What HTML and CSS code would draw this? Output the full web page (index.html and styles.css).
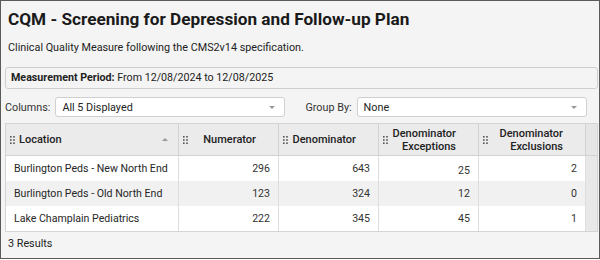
FILE: index.html
```html
<!DOCTYPE html>
<html>
<head>
<meta charset="utf-8">
<link rel="stylesheet" href="styles.css">
</head>
<body>
<div class="frame">
  <h1 class="title">CQM - Screening for Depression and Follow-up Plan</h1>
  <p class="desc">Clinical Quality Measure following the CMS2v14 specification.</p>
  <div class="period"><b>Measurement Period:</b>&nbsp;From 12/08/2024 to 12/08/2025</div>
  <div class="toolbar">
    <div class="field">
      <span class="label">Columns:</span>
      <div class="select"><span>All 5 Displayed</span><i class="caret"></i></div>
    </div>
    <div class="field">
      <span class="label">Group By:</span>
      <div class="select"><span>None</span><i class="caret"></i></div>
    </div>
  </div>
  <div class="grid">
    <div class="hcell first">
      <svg class="handle" width="5" height="8" viewBox="0 0 5 8"><rect x="0" y="0" width="1.6" height="1.6"/><rect x="3.2" y="0" width="1.6" height="1.6"/><rect x="0" y="3.2" width="1.6" height="1.6"/><rect x="3.2" y="3.2" width="1.6" height="1.6"/><rect x="0" y="6.4" width="1.6" height="1.6"/><rect x="3.2" y="6.4" width="1.6" height="1.6"/></svg>
      <span class="hlabel left">Location</span>
      <i class="sort"></i>
    </div>
    <div class="hcell">
      <svg class="handle" width="5" height="8" viewBox="0 0 5 8"><rect x="0" y="0" width="1.6" height="1.6"/><rect x="3.2" y="0" width="1.6" height="1.6"/><rect x="0" y="3.2" width="1.6" height="1.6"/><rect x="3.2" y="3.2" width="1.6" height="1.6"/><rect x="0" y="6.4" width="1.6" height="1.6"/><rect x="3.2" y="6.4" width="1.6" height="1.6"/></svg>
      <span class="hlabel">Numerator</span>
    </div>
    <div class="hcell">
      <svg class="handle" width="5" height="8" viewBox="0 0 5 8"><rect x="0" y="0" width="1.6" height="1.6"/><rect x="3.2" y="0" width="1.6" height="1.6"/><rect x="0" y="3.2" width="1.6" height="1.6"/><rect x="3.2" y="3.2" width="1.6" height="1.6"/><rect x="0" y="6.4" width="1.6" height="1.6"/><rect x="3.2" y="6.4" width="1.6" height="1.6"/></svg>
      <span class="hlabel">Denominator</span>
    </div>
    <div class="hcell">
      <svg class="handle" width="5" height="8" viewBox="0 0 5 8"><rect x="0" y="0" width="1.6" height="1.6"/><rect x="3.2" y="0" width="1.6" height="1.6"/><rect x="0" y="3.2" width="1.6" height="1.6"/><rect x="3.2" y="3.2" width="1.6" height="1.6"/><rect x="0" y="6.4" width="1.6" height="1.6"/><rect x="3.2" y="6.4" width="1.6" height="1.6"/></svg>
      <span class="hlabel">Denominator<br>Exceptions</span>
    </div>
    <div class="hcell">
      <svg class="handle" width="5" height="8" viewBox="0 0 5 8"><rect x="0" y="0" width="1.6" height="1.6"/><rect x="3.2" y="0" width="1.6" height="1.6"/><rect x="0" y="3.2" width="1.6" height="1.6"/><rect x="3.2" y="3.2" width="1.6" height="1.6"/><rect x="0" y="6.4" width="1.6" height="1.6"/><rect x="3.2" y="6.4" width="1.6" height="1.6"/></svg>
      <span class="hlabel">Denominator<br>Exclusions</span>
    </div>
    <div class="hfill"></div>

    <div class="cell text">Burlington Peds - New North End</div>
    <div class="cell num">296</div>
    <div class="cell num">643</div>
    <div class="cell num low">25</div>
    <div class="cell num">2</div>
    <div class="fill"></div>

    <div class="cell text alt">Burlington Peds - Old North End</div>
    <div class="cell num alt">123</div>
    <div class="cell num alt">324</div>
    <div class="cell num alt">12</div>
    <div class="cell num alt">0</div>
    <div class="fill"></div>

    <div class="cell text">Lake Champlain Pediatrics</div>
    <div class="cell num">222</div>
    <div class="cell num">345</div>
    <div class="cell num">45</div>
    <div class="cell num">1</div>
    <div class="fill"></div>
  </div>
  <div class="footer">3 Results</div>
</div>
</body>
</html>
```

FILE: styles.css
```css
* { box-sizing: border-box; }
html, body { margin: 0; padding: 0; }
body {
  width: 600px;
  height: 260px;
  background: #ffffff;
  font-family: Roboto, "Liberation Sans", Arial, sans-serif;
  color: #222;
}
.frame {
  width: 600px;
  height: 259px;
  border: 1px solid #5a5a5a;
  background: #f4f4f4;
  padding: 0 1px 0 4px;
  display: flex;
  flex-direction: column;
}
.title {
  margin: 8px 0 0 3px;
  font-size: 17.2px;
  font-weight: 700;
  line-height: 20px;
  color: #1a1a1a;
}
.desc {
  margin: 12px 0 0 3px;
  font-size: 10.8px;
  line-height: 14px;
  color: #222;
}
.period {
  margin-top: 12px;
  height: 22px;
  border: 1px solid #cfcfcf;
  border-radius: 3px;
  background: #f4f4f4;
  font-size: 10.7px;
  line-height: 20px;
  padding-left: 5px;
  color: #222;
  display: flex;
}
.period b { font-weight: 700; }
.toolbar {
  margin-top: 8px;
  height: 20px;
  display: flex;
  gap: 20px;
}
.field {
  display: flex;
  align-items: center;
  gap: 5px;
}
.label {
  font-size: 10.8px;
  color: #333;
}
.select {
  width: 230px;
  height: 20px;
  background: #fff;
  border: 1px solid #d0d0d0;
  border-radius: 3px;
  display: flex;
  align-items: center;
  justify-content: space-between;
  padding: 0 9px 0 6px;
  font-size: 10.8px;
  color: #222;
}
.caret {
  width: 0;
  height: 0;
  border-left: 3px solid transparent;
  border-right: 3px solid transparent;
  border-top: 3px solid #999;
}
.grid {
  margin-top: 6px;
  display: grid;
  grid-template-columns: 173px 100px 100px 100px 107px 1fr;
  grid-template-rows: 32px 25px 25px 25px;
  border: 1px solid #d4d4d4;
  background: #fff;
}
.hcell {
  background: #ebebeb;
  border-right: 1px solid #d2d2d2;
  border-bottom: 1px solid #d2d2d2;
  display: flex;
  align-items: center;
  padding-left: 4px;
  font-size: 11px;
  font-weight: 500;
  color: #222;
}
.handle { fill: #555; flex: none; }
.hlabel {
  flex: 1;
  text-align: right;
  padding-right: 22px;
  line-height: 13px;
}
.hlabel.left {
  text-align: left;
  padding: 0 0 0 4px;
}
.sort {
  width: 0;
  height: 0;
  border-left: 3px solid transparent;
  border-right: 3px solid transparent;
  border-bottom: 3px solid #999;
  margin-right: 10px;
}
.hfill {
  background: #e6e6e6;
  border-bottom: 1px solid #d2d2d2;
}
.fill { background: #e8e8e8; }
.cell {
  border-right: 1px solid #dedede;
  display: flex;
  align-items: center;
  font-size: 10.6px;
  color: #262626;
}
.cell.text { padding-left: 8px; }
.cell.num { justify-content: flex-end; padding-right: 8px; color: #333; }
.cell.low { padding-top: 4px; }
.cell.alt { background: #f1f1f1; }
.footer {
  margin: 2px 0 0 3px;
  font-size: 10.8px;
  line-height: 20px;
  color: #222;
}
```
